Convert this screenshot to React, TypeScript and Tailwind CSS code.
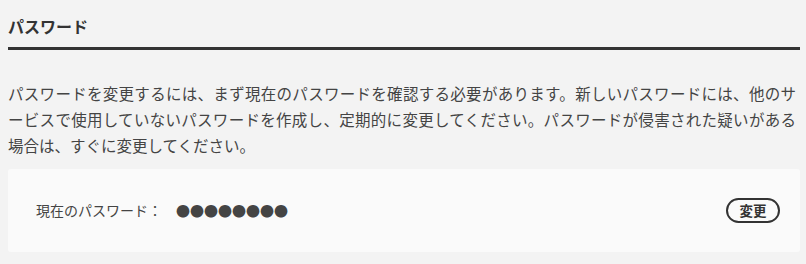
export default function App() {
  return (
    <div
      className="min-h-[264px] bg-[#f3f3f3] px-[8px] pr-[6px] text-[#444]"
      style={{ fontFamily: '"Noto Sans CJK JP", "Noto Sans", sans-serif' }}
    >
      <h2 className="border-b-[3px] border-[#333] pt-[14px] pb-[9px] text-[16px] leading-[24px] font-bold text-[#333]">
        パスワード
      </h2>

      <p className="mt-[30px] mr-[4px] text-justify text-[15.5px] leading-[26px]">
        パスワードを変更するには、まず現在のパスワードを確認する必要があります。新しいパスワードには、他のサービスで使用していないパスワードを作成し、定期的に変更してください。パスワードが侵害された疑いがある場合は、すぐに変更してください。
      </p>

      <div className="mt-[11px] flex h-[83px] items-center justify-between rounded-[3px] bg-[#fafafa] pl-[28px] pr-[20px]">
        <div className="flex items-center text-[14px]">
          <span className="w-[140px]">現在のパスワード：</span>
          <span className="text-[14px] text-[#444]">●●●●●●●●</span>
        </div>
        <button className="flex h-[25px] w-[54px] items-center justify-center rounded-full border-2 border-[#333] text-[13.5px] font-bold text-[#333]">
          変更
        </button>
      </div>
    </div>
  );
}
